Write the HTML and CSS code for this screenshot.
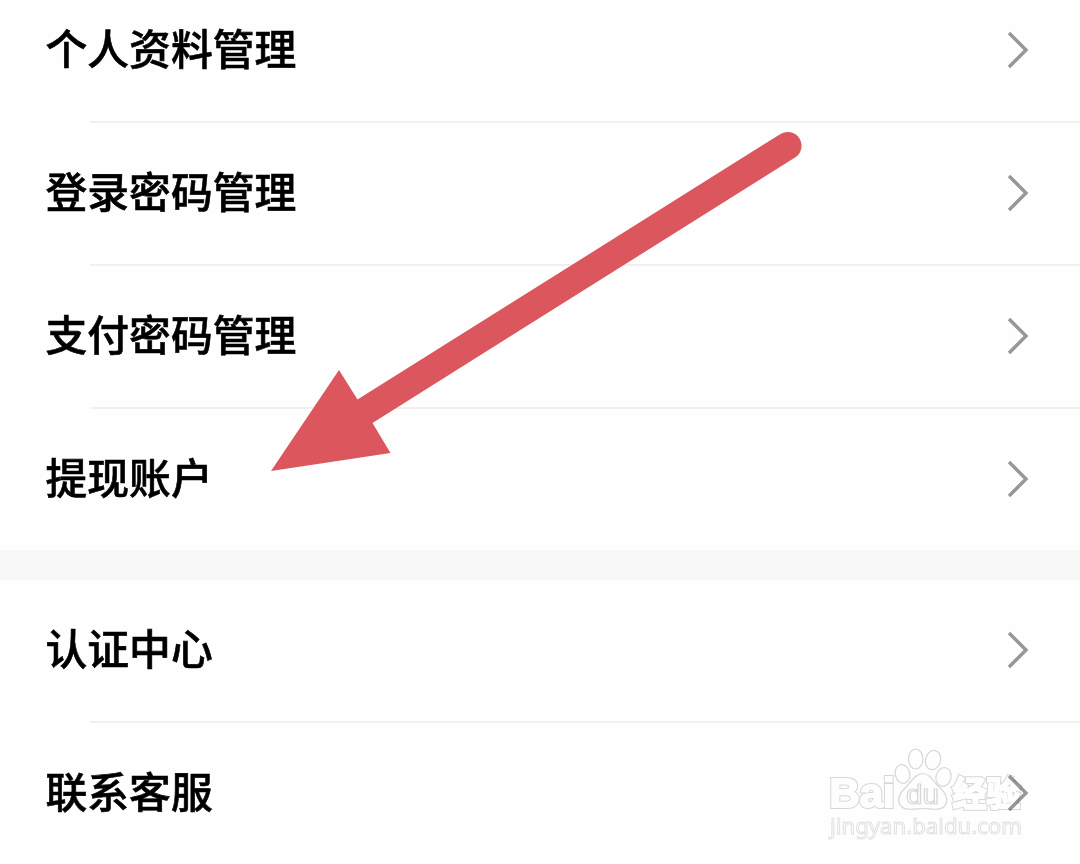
FILE: index.html
```html
<!DOCTYPE html>
<html lang="zh-CN">

<head>
    <meta charset="UTF-8">
    <title>账户管理</title>
    <link rel="stylesheet" href="styles.css">
</head>

<body>
    <div class="page">
        <ul class="menu menu-first">
            <li class="menu-item">
                <span>个人资料管理</span>
                <svg class="chevron" viewBox="0 0 24 40"><path d="M3 3L20 20L3 37" /></svg>
            </li>
            <li class="menu-item">
                <span>登录密码管理</span>
                <svg class="chevron" viewBox="0 0 24 40"><path d="M3 3L20 20L3 37" /></svg>
            </li>
            <li class="menu-item">
                <span>支付密码管理</span>
                <svg class="chevron" viewBox="0 0 24 40"><path d="M3 3L20 20L3 37" /></svg>
            </li>
            <li class="menu-item">
                <span>提现账户</span>
                <svg class="chevron" viewBox="0 0 24 40"><path d="M3 3L20 20L3 37" /></svg>
            </li>
        </ul>

        <ul class="menu">
            <li class="menu-item">
                <span>认证中心</span>
                <svg class="chevron" viewBox="0 0 24 40"><path d="M3 3L20 20L3 37" /></svg>
            </li>
            <li class="menu-item">
                <span>联系客服</span>
                <svg class="chevron" viewBox="0 0 24 40"><path d="M3 3L20 20L3 37" /></svg>
            </li>
        </ul>

        <!-- Arrow pointing at the withdrawal account -->
        <svg class="arrow" viewBox="0 0 540 350">
            <path d="M1 341L69 240L87.500 269.500L510.500 4A13.500 13.500 0 0 1 525 27.500L102.500 293L120.500 323Z" />
        </svg>

        <!-- Watermark: grey outline first, white letters on top -->
        <svg class="watermark" viewBox="0 0 210 100">
            <defs>
                <g id="letters">
                    <text class="wm-bai" x="8.500" y="62" textLength="65" lengthAdjust="spacingAndGlyphs">Bai</text>
                    <text class="wm-cn" x="131.500" y="61">经验</text>
                </g>
            </defs>
            <use class="wm-outline" href="#letters" />
            <use class="wm-inner" href="#letters" />
            <ellipse cx="81.500" cy="29" rx="7.300" ry="9.500" transform="rotate(-14 81.500 29)" />
            <ellipse cx="94.700" cy="14" rx="7.200" ry="10" />
            <ellipse cx="112" cy="15" rx="7.400" ry="9.700" transform="rotate(14 112 15)" />
            <ellipse cx="122.500" cy="32" rx="7.500" ry="9.500" transform="rotate(14 122.500 32)" />
            <path d="M101.500 28.500C95 28.500 91 36 86 41C81 46 76.500 51 78 57C80.500 67 91 64 101.500 63.500C113 64 123 67 125.500 57C127 50 122 46 117 41C112 36 109 28.500 101.500 28.500Z" />
            <text class="wm-du" x="85" y="59" textLength="33" lengthAdjust="spacingAndGlyphs">du</text>
            <text class="wm-url" x="9" y="89" textLength="192" lengthAdjust="spacingAndGlyphs">jingyan.baidu.com</text>
        </svg>
    </div>
</body>

</html>
```
FILE: styles.css
```css
body {
    margin: 0;
    background-color: #fefefe;
    font-family: "Noto Sans CJK SC", sans-serif;
    color: #000;
}

.page {
    height: 864px;
    position: relative;
    overflow: hidden;
}

.menu {
    list-style: none;
    margin: 0;
    padding: 0;
}

.menu-first {
    margin-top: -20px;
    border-bottom: 30px solid #f8f8f8;
}

.menu-item {
    display: flex;
    align-items: center;
    justify-content: space-between;
    box-sizing: border-box;
    height: 143px;
    padding: 0 50px 3px 45.5px;
    font-size: 41.8px;
    font-weight: 500;
    line-height: 60px;
    -webkit-text-stroke: 0.6px #000;
    background: linear-gradient(#f0f0f0, #f0f0f0) 90px 100% / 100% 2px no-repeat;
}

/* the separator is missing under the last row */
.menu-item:last-child {
    height: 141px;
    padding-bottom: 1px;
    background: none;
}

.menu-item span {
    padding-bottom: 7px;
}

.chevron {
    width: 24px;
    height: 40px;
    fill: none;
    stroke: #979797;
    stroke-width: 3.4;
}

.arrow {
    position: absolute;
    left: 270px;
    top: 130px;
    width: 540px;
    height: 350px;
    fill: #db575d;
}

.watermark {
    position: absolute;
    left: 821px;
    top: 745px;
    width: 210px;
    height: 100px;
    fill: #fff;
    stroke: #d8d8d8;
    stroke-width: 1.2;
    mix-blend-mode: multiply;
}

.wm-outline {
    stroke-width: 4;
}

.wm-inner {
    stroke: #fff;
    stroke-width: 2;
}

.wm-bai {
    font: bold 41px "Liberation Sans", sans-serif;
}

.wm-du {
    font: 27px "Liberation Sans", sans-serif;
}

.wm-cn {
    font: bold 34px "Noto Sans CJK SC", sans-serif;
}

.wm-url {
    font: 22px "Noto Sans", sans-serif;
    stroke: #e2e2e2;
    stroke-width: 1;
}
```
